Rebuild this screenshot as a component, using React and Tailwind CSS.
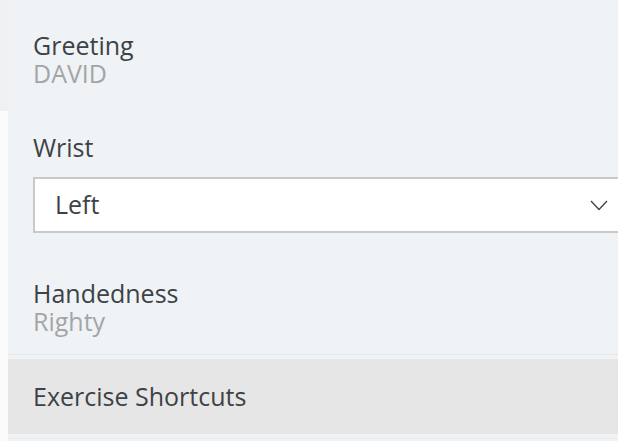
const font = { fontFamily: '"Open Sans", Lato, sans-serif' };

const Field = ({ label, value }) => (
    <div className="px-[25px]">
        <div className="text-[25px] leading-[28px] text-[#3d4247]">{label}</div>
        {value && <div className="text-[25px] leading-[28px] text-[#a3a5a7]">{value}</div>}
    </div>
);

const App = () => {
    return (
        <div className="w-[618px] h-[441px] flex overflow-hidden bg-[#fbfbfb]" style={font}>
            {/* left gutter */}
            <div className="w-2 shrink-0">
                <div className="h-[111px] bg-[#eff0f1]"></div>
            </div>

            {/* settings column */}
            <div className="flex-1 bg-[#eff3f5] flex flex-col">
                <div className="pt-[31px]">
                    <Field label="Greeting" value="DAVID" />
                </div>

                <div className="pt-[46px]">
                    <Field label="Wrist" />
                    <div className="pl-[25px] mt-[16px]">
                        <div className="h-[56px] w-[600px] bg-white border-2 border-r-0 border-[#c9c9c9] flex items-center justify-between pl-[20px] pr-[25px]">
                            <span className="text-[25px] text-[#3d4247]">Left</span>
                            <svg width="18" height="11" viewBox="0 0 18 11" fill="none">
                                <polyline points="1,1 9,9.5 17,1" stroke="#3d4247" strokeWidth="1.3" />
                            </svg>
                        </div>
                    </div>
                </div>

                <div className="pt-[46px]">
                    <Field label="Handedness" value="Righty" />
                </div>

                <div className="mt-[19px] border-b border-[#e6eaed]"></div>
                <div className="mt-[4px] h-[75px] bg-[#e6e6e6] flex items-center px-[25px]">
                    <span className="text-[25px] text-[#3d4247]">Exercise Shortcuts</span>
                </div>
                <div className="mt-[4px] border-b border-[#e6eaed]"></div>
            </div>
        </div>
    );
};

export default App;
